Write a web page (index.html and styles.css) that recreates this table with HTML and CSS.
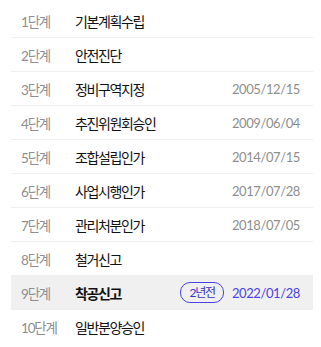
FILE: index.html
```html
<!DOCTYPE html>
<html lang="ko">
<head>
<meta charset="utf-8">
<link rel="stylesheet" href="styles.css">
</head>
<body>
<ul class="steps">
  <li class="step"><span class="no">1단계</span><span class="name">기본계획수립</span></li>
  <li class="step"><span class="no">2단계</span><span class="name">안전진단</span></li>
  <li class="step"><span class="no">3단계</span><span class="name">정비구역지정</span><span class="date">2005/12/15</span></li>
  <li class="step"><span class="no">4단계</span><span class="name">추진위원회승인</span><span class="date">2009/06/04</span></li>
  <li class="step"><span class="no">5단계</span><span class="name">조합설립인가</span><span class="date">2014/07/15</span></li>
  <li class="step"><span class="no">6단계</span><span class="name">사업시행인가</span><span class="date">2017/07/28</span></li>
  <li class="step"><span class="no">7단계</span><span class="name">관리처분인가</span><span class="date">2018/07/05</span></li>
  <li class="step"><span class="no">8단계</span><span class="name">철거신고</span></li>
  <li class="step current"><span class="no">9단계</span><span class="name">착공신고</span><span class="badge">2년전</span><span class="date">2022/01/28</span></li>
  <li class="step"><span class="no">10단계</span><span class="name">일반분양승인</span></li>
</ul>
</body>
</html>
```
FILE: styles.css
```css
html, body {
  margin: 0;
  padding: 0;
  background: #fff;
}
body {
  padding: 4px 8px 0 11px;
  font-family: Lato, "Noto Sans CJK KR", sans-serif;
}
.steps {
  list-style: none;
  margin: 0;
  padding: 0;
}
.step {
  display: flex;
  align-items: center;
  height: 33px;
  border-bottom: 1px solid #efefef;
  padding: 0 13px 0 10px;
}
.step:last-child {
  border-bottom: none;
}
.no {
  width: 54px;
  flex: none;
  font-size: 13.5px;
  letter-spacing: -1.2px;
  color: #8e8e8e;
}
.name {
  flex: 1;
  font-size: 14px;
  letter-spacing: -1.4px;
  color: #111;
}
.date {
  font-size: 13px;
  color: #8e8e8e;
  letter-spacing: -0.4px;
}
.current {
  background: #f0f0f0;
}
.current .name {
  font-weight: 700;
}
.current .date {
  color: #4a43e4;
}
.badge {
  margin-right: 8px;
  border: 1px solid #4a43e4;
  border-radius: 10px;
  height: 19px;
  line-height: 19px;
  padding: 0 8px;
  font-size: 12px;
  letter-spacing: -1.2px;
  color: #3a33c8;
}
```
